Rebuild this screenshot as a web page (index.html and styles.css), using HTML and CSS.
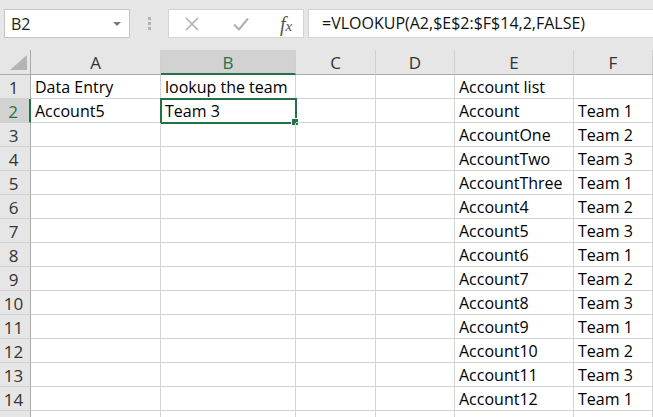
FILE: index.html
```html
<!DOCTYPE html>
<html>
<head>
<meta charset="utf-8">
<link rel="stylesheet" href="styles.css">
</head>
<body>
<div class="toolbar">
  <div class="namebox"><span class="ref">B2</span><span class="caret"></span></div>
  <div class="grip"><i></i><i></i><i></i></div>
  <div class="fbuttons">
    <svg class="xicon" width="16" height="16" viewBox="0 0 16 16"><path d="M2 2L14 14M14 2L2 14" stroke="#b0b0b0" stroke-width="1.6" fill="none"/></svg>
    <svg class="check" width="18" height="16" viewBox="0 0 18 16"><path d="M2 8.5L7 13.5L16 2.5" stroke="#b0b0b0" stroke-width="2" fill="none"/></svg>
    <span class="fx">f<sub>x</sub></span>
  </div>
  <div class="formula">=VLOOKUP(A2,$E$2:$F$14,2,FALSE)</div>
</div>
<div class="sheet">
  <div class="corner"><span class="tri"></span></div>
  <div class="ch">A</div><div class="ch sel">B</div><div class="ch">C</div><div class="ch">D</div><div class="ch">E</div><div class="ch">F</div>

  <div class="rh">1</div><div class="c">Data Entry</div><div class="c">lookup the team</div><div class="c"></div><div class="c"></div><div class="c">Account list</div><div class="c"></div>
  <div class="rh sel">2</div><div class="c">Account5</div><div class="c active">Team 3<span class="handle"></span></div><div class="c"></div><div class="c"></div><div class="c">Account</div><div class="c">Team 1</div>
  <div class="rh">3</div><div class="c"></div><div class="c"></div><div class="c"></div><div class="c"></div><div class="c">AccountOne</div><div class="c">Team 2</div>
  <div class="rh">4</div><div class="c"></div><div class="c"></div><div class="c"></div><div class="c"></div><div class="c">AccountTwo</div><div class="c">Team 3</div>
  <div class="rh">5</div><div class="c"></div><div class="c"></div><div class="c"></div><div class="c"></div><div class="c">AccountThree</div><div class="c">Team 1</div>
  <div class="rh">6</div><div class="c"></div><div class="c"></div><div class="c"></div><div class="c"></div><div class="c">Account4</div><div class="c">Team 2</div>
  <div class="rh">7</div><div class="c"></div><div class="c"></div><div class="c"></div><div class="c"></div><div class="c">Account5</div><div class="c">Team 3</div>
  <div class="rh">8</div><div class="c"></div><div class="c"></div><div class="c"></div><div class="c"></div><div class="c">Account6</div><div class="c">Team 1</div>
  <div class="rh">9</div><div class="c"></div><div class="c"></div><div class="c"></div><div class="c"></div><div class="c">Account7</div><div class="c">Team 2</div>
  <div class="rh">10</div><div class="c"></div><div class="c"></div><div class="c"></div><div class="c"></div><div class="c">Account8</div><div class="c">Team 3</div>
  <div class="rh">11</div><div class="c"></div><div class="c"></div><div class="c"></div><div class="c"></div><div class="c">Account9</div><div class="c">Team 1</div>
  <div class="rh">12</div><div class="c"></div><div class="c"></div><div class="c"></div><div class="c"></div><div class="c">Account10</div><div class="c">Team 2</div>
  <div class="rh">13</div><div class="c"></div><div class="c"></div><div class="c"></div><div class="c"></div><div class="c">Account11</div><div class="c">Team 3</div>
  <div class="rh">14</div><div class="c"></div><div class="c"></div><div class="c"></div><div class="c"></div><div class="c">Account12</div><div class="c">Team 1</div>
  <div class="rh"></div><div class="c"></div><div class="c"></div><div class="c"></div><div class="c"></div><div class="c"></div><div class="c"></div>
</div>
</body>
</html>
```
FILE: styles.css
```css
html, body {
  margin: 0;
  padding: 0;
  background: #ffffff;
  overflow: hidden;
}
body {
  font-family: "Open Sans", "Liberation Sans", sans-serif;
  color: #000;
  width: 653px;
  height: 417px;
}
.toolbar {
  height: 50px;
  background: #e6e6e6;
  display: flex;
  align-items: flex-start;
  padding-top: 9px;
  box-sizing: border-box;
}
.namebox {
  margin-left: 4px;
  width: 126px;
  height: 29px;
  box-sizing: border-box;
  background: #fff;
  border: 1px solid #c6c6c6;
  display: flex;
  align-items: center;
  justify-content: space-between;
  padding: 0 8px 0 6px;
}
.ref {
  font-size: 16px;
  color: #222;
}
.caret {
  width: 0;
  height: 0;
  border-left: 4px solid transparent;
  border-right: 4px solid transparent;
  border-top: 4px solid #7a7a7a;
}
.grip {
  width: 38px;
  height: 29px;
  display: flex;
  flex-direction: column;
  align-items: center;
  justify-content: center;
  gap: 2px;
}
.grip i {
  display: block;
  width: 3px;
  height: 3px;
  background: #b2b2b2;
}
.fbuttons {
  width: 136px;
  height: 29px;
  box-sizing: border-box;
  background: #fff;
  border: 1px solid #d4d4d4;
  display: flex;
  align-items: center;
  padding-left: 15px;
}
.xicon { margin-right: 32px; }
.check { margin-right: 30px; }
.fx {
  font-family: "Liberation Serif", "DejaVu Serif", serif;
  font-style: italic;
  font-size: 20px;
  color: #555;
  line-height: 1;
}
.fx sub {
  font-size: 15px;
  vertical-align: 0;
}
.formula {
  margin-left: 4px;
  flex: 1;
  height: 29px;
  box-sizing: border-box;
  background: #fff;
  border: 1px solid #d4d4d4;
  border-right: none;
  font-size: 16px;
  line-height: 27px;
  padding-left: 13px;
  color: #111;
  white-space: nowrap;
}
.sheet {
  display: grid;
  grid-template-columns: 31px 130px 135px 80px 79px 119px 79px;
  grid-template-rows: 25px repeat(15, 24px);
}
.corner, .ch, .rh, .c {
  box-sizing: border-box;
  border-right: 1px solid #d4d4d4;
  border-bottom: 1px solid #d4d4d4;
}
.corner {
  background: #e6e6e6;
  border-right: 1px solid #ababab;
  border-bottom: 1px solid #ababab;
  position: relative;
}
.tri {
  position: absolute;
  right: 3px;
  bottom: 4px;
  width: 0;
  height: 0;
  border-left: 17px solid transparent;
  border-bottom: 15px solid #b4b4b4;
}
.ch {
  background: #e6e6e6;
  border-right: 1px solid #d0d0d0;
  border-bottom: 1px solid #ababab;
  text-align: center;
  font-size: 17px;
  line-height: 25px;
  color: #333;
}
.ch.sel {
  background: #d2d2d2;
  color: #217346;
  border-bottom: 2px solid #217346;
}
.rh {
  background: #e6e6e6;
  border-right: 1px solid #ababab;
  border-bottom: 1px solid #d0d0d0;
  text-align: center;
  font-size: 17px;
  line-height: 25px;
  color: #333;
  padding-right: 3px;
}
.rh.sel {
  background: #d2d2d2;
  color: #217346;
  border-right: 2px solid #217346;
}
.c {
  font-size: 16px;
  line-height: 25px;
  padding-left: 4px;
  white-space: nowrap;
  overflow: visible;
  position: relative;
}
.c.active {
  border: 2px solid #217346;
  margin: -1px 0 0 -1px;
  padding-left: 3px;
  line-height: 22px;
  width: calc(100% + 2px);
  height: calc(100% + 2px);
}
.handle {
  position: absolute;
  right: -4px;
  bottom: -4px;
  width: 6px;
  height: 6px;
  background: #217346;
  border: 1px solid #fff;
}
```
